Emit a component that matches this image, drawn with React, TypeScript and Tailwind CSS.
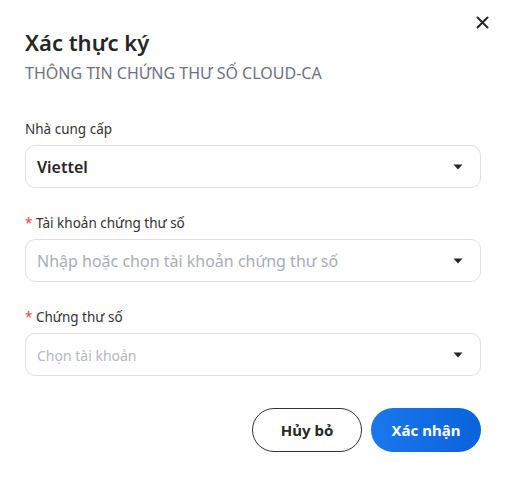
function Caret() {
  return (
    <svg width="10" height="6" viewBox="0 0 10 6" className="shrink-0">
      <path d="M0.5 0.5h9L5 5.5z" fill="#262626" />
    </svg>
  );
}

function SelectBox({ value, placeholder, small }: { value?: string; placeholder?: string; small?: boolean }) {
  return (
    <div className="flex items-center h-[43px] rounded-[10px] border border-[#dfe1e6] bg-white pl-[11px] pr-[17px]">
      <div className="flex-1 truncate">
        {value ? (
          <span className="text-[16px] font-semibold text-[#262626]">{value}</span>
        ) : (
          <span className={small ? 'text-[14px] text-[#b4b8bf]' : 'text-[16px] text-[#a9aeb6]'}>{placeholder}</span>
        )}
      </div>
      <Caret />
    </div>
  );
}

export default function App() {
  return (
    <div className="w-[506px] h-[477px] bg-white relative" style={{ fontFamily: '"Noto Sans", "Open Sans", sans-serif' }}>
      <button className="absolute right-[17px] top-[16px]">
        <svg width="13" height="13" viewBox="0 0 13 13">
          <path d="M1.5 1.5l10 10M11.5 1.5l-10 10" stroke="#262626" strokeWidth="2" strokeLinecap="round" />
        </svg>
      </button>

      <div className="px-[25px] pt-[27px]">
        {/* Header */}
        <h1 className="text-[22px] font-semibold text-[#262626] leading-[30px]">Xác thực ký</h1>
        <p className="mt-[6px] text-[16px] text-[#6b7280] leading-[20px]">THÔNG TIN CHỨNG THƯ SỐ CLOUD-CA</p>

        {/* Fields */}
        <div className="mt-[36px] space-y-[25px]">
          <div>
            <label className="block text-[13.5px] text-[#333] leading-[20px] mb-[6px]">Nhà cung cấp</label>
            <SelectBox value="Viettel" />
          </div>
          <div>
            <label className="block text-[13.5px] text-[#333] leading-[20px] mb-[6px]">
              <span className="text-[#ef4444]">*</span> Tài khoản chứng thư số
            </label>
            <SelectBox placeholder="Nhập hoặc chọn tài khoản chứng thư số" />
          </div>
          <div>
            <label className="block text-[13.5px] text-[#333] leading-[20px] mb-[6px]">
              <span className="text-[#ef4444]">*</span> Chứng thư số
            </label>
            <SelectBox placeholder="Chọn tài khoản" small />
          </div>
        </div>

        {/* Actions */}
        <div className="mt-[32px] flex justify-end gap-[9px]">
          <button className="w-[110px] h-[44px] rounded-full border border-[#333] text-[15px] font-bold text-[#262626]">
            Hủy bỏ
          </button>
          <button className="w-[110px] h-[44px] rounded-full bg-gradient-to-r from-[#1a78ec] to-[#0b62dc] text-[15px] font-bold text-white">
            Xác nhận
          </button>
        </div>
      </div>
    </div>
  );
}
